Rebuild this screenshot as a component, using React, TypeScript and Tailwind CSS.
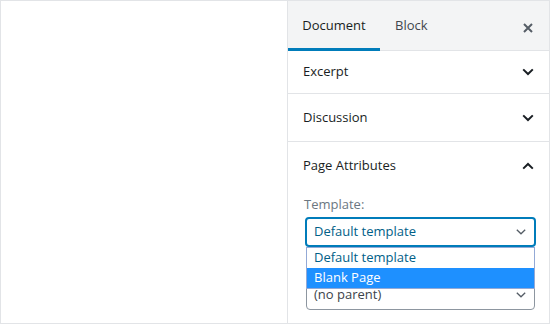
import type { ReactNode } from "react";

const font = { fontFamily: '"Open Sans", "Noto Sans", sans-serif' };

function ChevronDown({ className = "" }: { className?: string }) {
  return (
    <svg viewBox="0 0 12 8" className={className} fill="none">
      <path d="M1.2 1.4 6 6 10.8 1.4" stroke="currentColor" strokeWidth="2" />
    </svg>
  );
}

function ChevronUp({ className = "" }: { className?: string }) {
  return (
    <svg viewBox="0 0 12 8" className={className} fill="none">
      <path d="M1.2 6.6 6 2 10.8 6.6" stroke="currentColor" strokeWidth="2" />
    </svg>
  );
}

function SmallChevron() {
  return (
    <svg viewBox="0 0 10 6" className="h-[6px] w-[10px] text-[#555d66]" fill="none">
      <path d="M0.8 0.8 5 4.8 9.2 0.8" stroke="currentColor" strokeWidth="1.3" />
    </svg>
  );
}

function PanelRow({ title, open, height }: { title: string; open?: boolean; height: string }) {
  return (
    <div
      className={`flex items-center justify-between pl-[15px] pr-[15px] ${height} ${
        open ? "" : "border-b border-[#e2e4e7]"
      }`}
    >
      <span className="text-[13px] text-[#191e23]">{title}</span>
      {open ? (
        <ChevronUp className="h-[8px] w-[12px] text-[#191e23]" />
      ) : (
        <ChevronDown className="h-[8px] w-[12px] text-[#191e23]" />
      )}
    </div>
  );
}

function Tab({ children, active }: { children: ReactNode; active?: boolean }) {
  return (
    <div
      className={`-mb-px flex h-[50px] items-center border-b-[3px] pt-[3px] text-[13px] ${
        active
          ? "w-[92px] justify-center border-[#007cba] text-[#191e23]"
          : "border-transparent px-[15px] text-[#40464d]"
      }`}
    >
      {children}
    </div>
  );
}

export default function App() {
  return (
    <div className="flex h-[324px] w-[550px] border border-[#e2e4e7] bg-white" style={font}>
      <div className="flex-1 bg-white" />
      <aside className="flex w-[262px] flex-col border-l border-[#e2e4e7]">
        <div className="flex h-[50px] items-start justify-between border-b border-[#e2e4e7] bg-[#f3f4f5]">
          <div className="flex">
            <Tab active>Document</Tab>
            <Tab>Block</Tab>
          </div>
          <div className="flex h-[50px] items-center pr-[16px] pt-[3px]">
            <svg viewBox="0 0 10 10" className="h-[10px] w-[10px]" fill="none">
              <path d="M1 1 9 9M9 1 1 9" stroke="#555d66" strokeWidth="2" />
            </svg>
          </div>
        </div>
        <PanelRow title="Excerpt" height="h-[43px]" />
        <PanelRow title="Discussion" height="h-[48px]" />
        <PanelRow title="Page Attributes" height="h-[48px]" open />
        <div className="relative flex flex-col pl-[18px] pr-[14px] pt-[5px]">
          <span className="-ml-[2px] text-[13px] leading-[18px] text-[#6c7781]">Template:</span>
          <div className="-mx-px mt-[4px] flex h-[30px] items-center justify-between rounded-[4px] border-2 border-[#007cba] pl-[7px] pr-[8px] text-[13px] text-[#016087]">
            <span>Default template</span>
            <SmallChevron />
          </div>
          {/* "Parent Page:" label sits under the open list */}
          <div className="mt-[6px] h-[18px]" />
          <div className="mt-[9px] flex h-[30px] items-center justify-between rounded-[4px] border border-[#8d96a0] pl-[7px] pr-[8px] text-[13px] text-[#3c434a]">
            <span>(no parent)</span>
            <SmallChevron />
          </div>
          <div className="absolute left-[18px] right-[14px] top-[57px] flex flex-col border border-[#93a9d6] bg-white text-[13px]">
            <div className="flex h-[20px] items-center pl-[7px] text-[#016087]">Default template</div>
            <div className="flex h-[20px] items-center bg-[#1e90ff] pl-[7px] text-white">Blank Page</div>
          </div>
        </div>
      </aside>
    </div>
  );
}
